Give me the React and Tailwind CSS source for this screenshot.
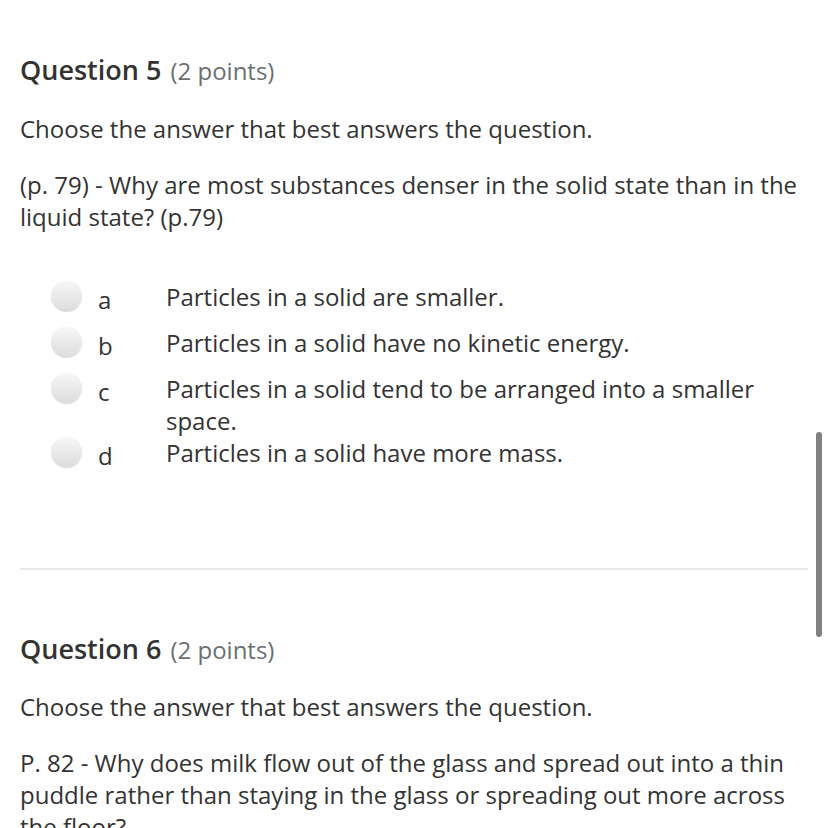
import React from "react";

const Radio = () => (
    <span className="block w-[31px] h-[31px] rounded-full bg-gradient-to-b from-[#f7f7f7] to-[#dcdcdc] shadow-[0_0_1px_rgba(0,0,0,0.15)]"></span>
);

const options = [
    { letter: "a", text: "Particles in a solid are smaller.", pb: "pb-[14px]" },
    { letter: "b", text: "Particles in a solid have no kinetic energy.", pb: "pb-[14px]" },
    { letter: "c", text: "Particles in a solid tend to be arranged into a smaller space.", pb: "pb-0" },
    { letter: "d", text: "Particles in a solid have more mass.", pb: "pb-0" },
];

export default function App() {
    return (
        <div className="relative w-[828px] h-[828px] overflow-hidden bg-white text-[#333333] font-['Open_Sans',sans-serif]">
            <div className="px-5 pt-[51px]">
                <h2 className="text-[27px] leading-[38px] font-semibold text-[#333333]">
                    Question 5 <span className="ml-[2px] text-[24px] font-normal text-[#6b6f73]">(2 points)</span>
                </h2>
                <p className="mt-[23px] text-[24px] leading-[32px]">Choose the answer that best answers the question.</p>
                <p className="mt-6 text-[24px] leading-[32px]">
                    (p. 79) - Why are most substances denser in the solid state than in the liquid state? (p.79)
                </p>

                <div className="mt-[48px] flex flex-col">
                    {options.map((o) => (
                        <div key={o.letter} className={`flex items-start ${o.pb}`}>
                            <div className="w-[146px] h-[32px] flex items-start">
                                <div className="pl-[31px]"><Radio /></div>
                                <span className="ml-[16px] text-[24px] leading-[32px] translate-y-[3px] text-[#333333]">{o.letter}</span>
                            </div>
                            <span className="text-[24px] leading-[32px] w-[620px]">{o.text}</span>
                        </div>
                    ))}
                </div>

                <div className="mt-[99px] h-[2px] w-[788px] bg-[#e8e8e8]"></div>

                <h2 className="mt-[60px] text-[27px] leading-[38px] font-semibold text-[#333333]">
                    Question 6 <span className="ml-[2px] text-[24px] font-normal text-[#6b6f73]">(2 points)</span>
                </h2>
                <p className="mt-[22px] text-[24px] leading-[32px]">Choose the answer that best answers the question.</p>
                <p className="mt-6 text-[24px] leading-[32px]">
                    P. 82 - Why does milk flow out of the glass and spread out into a thin puddle rather than staying in the glass or spreading out more across the floor?
                </p>
            </div>

            <div className="absolute left-[816px] top-[432px] w-[6px] h-[205px] rounded-full bg-[#808080]"></div>
        </div>
    );
}
